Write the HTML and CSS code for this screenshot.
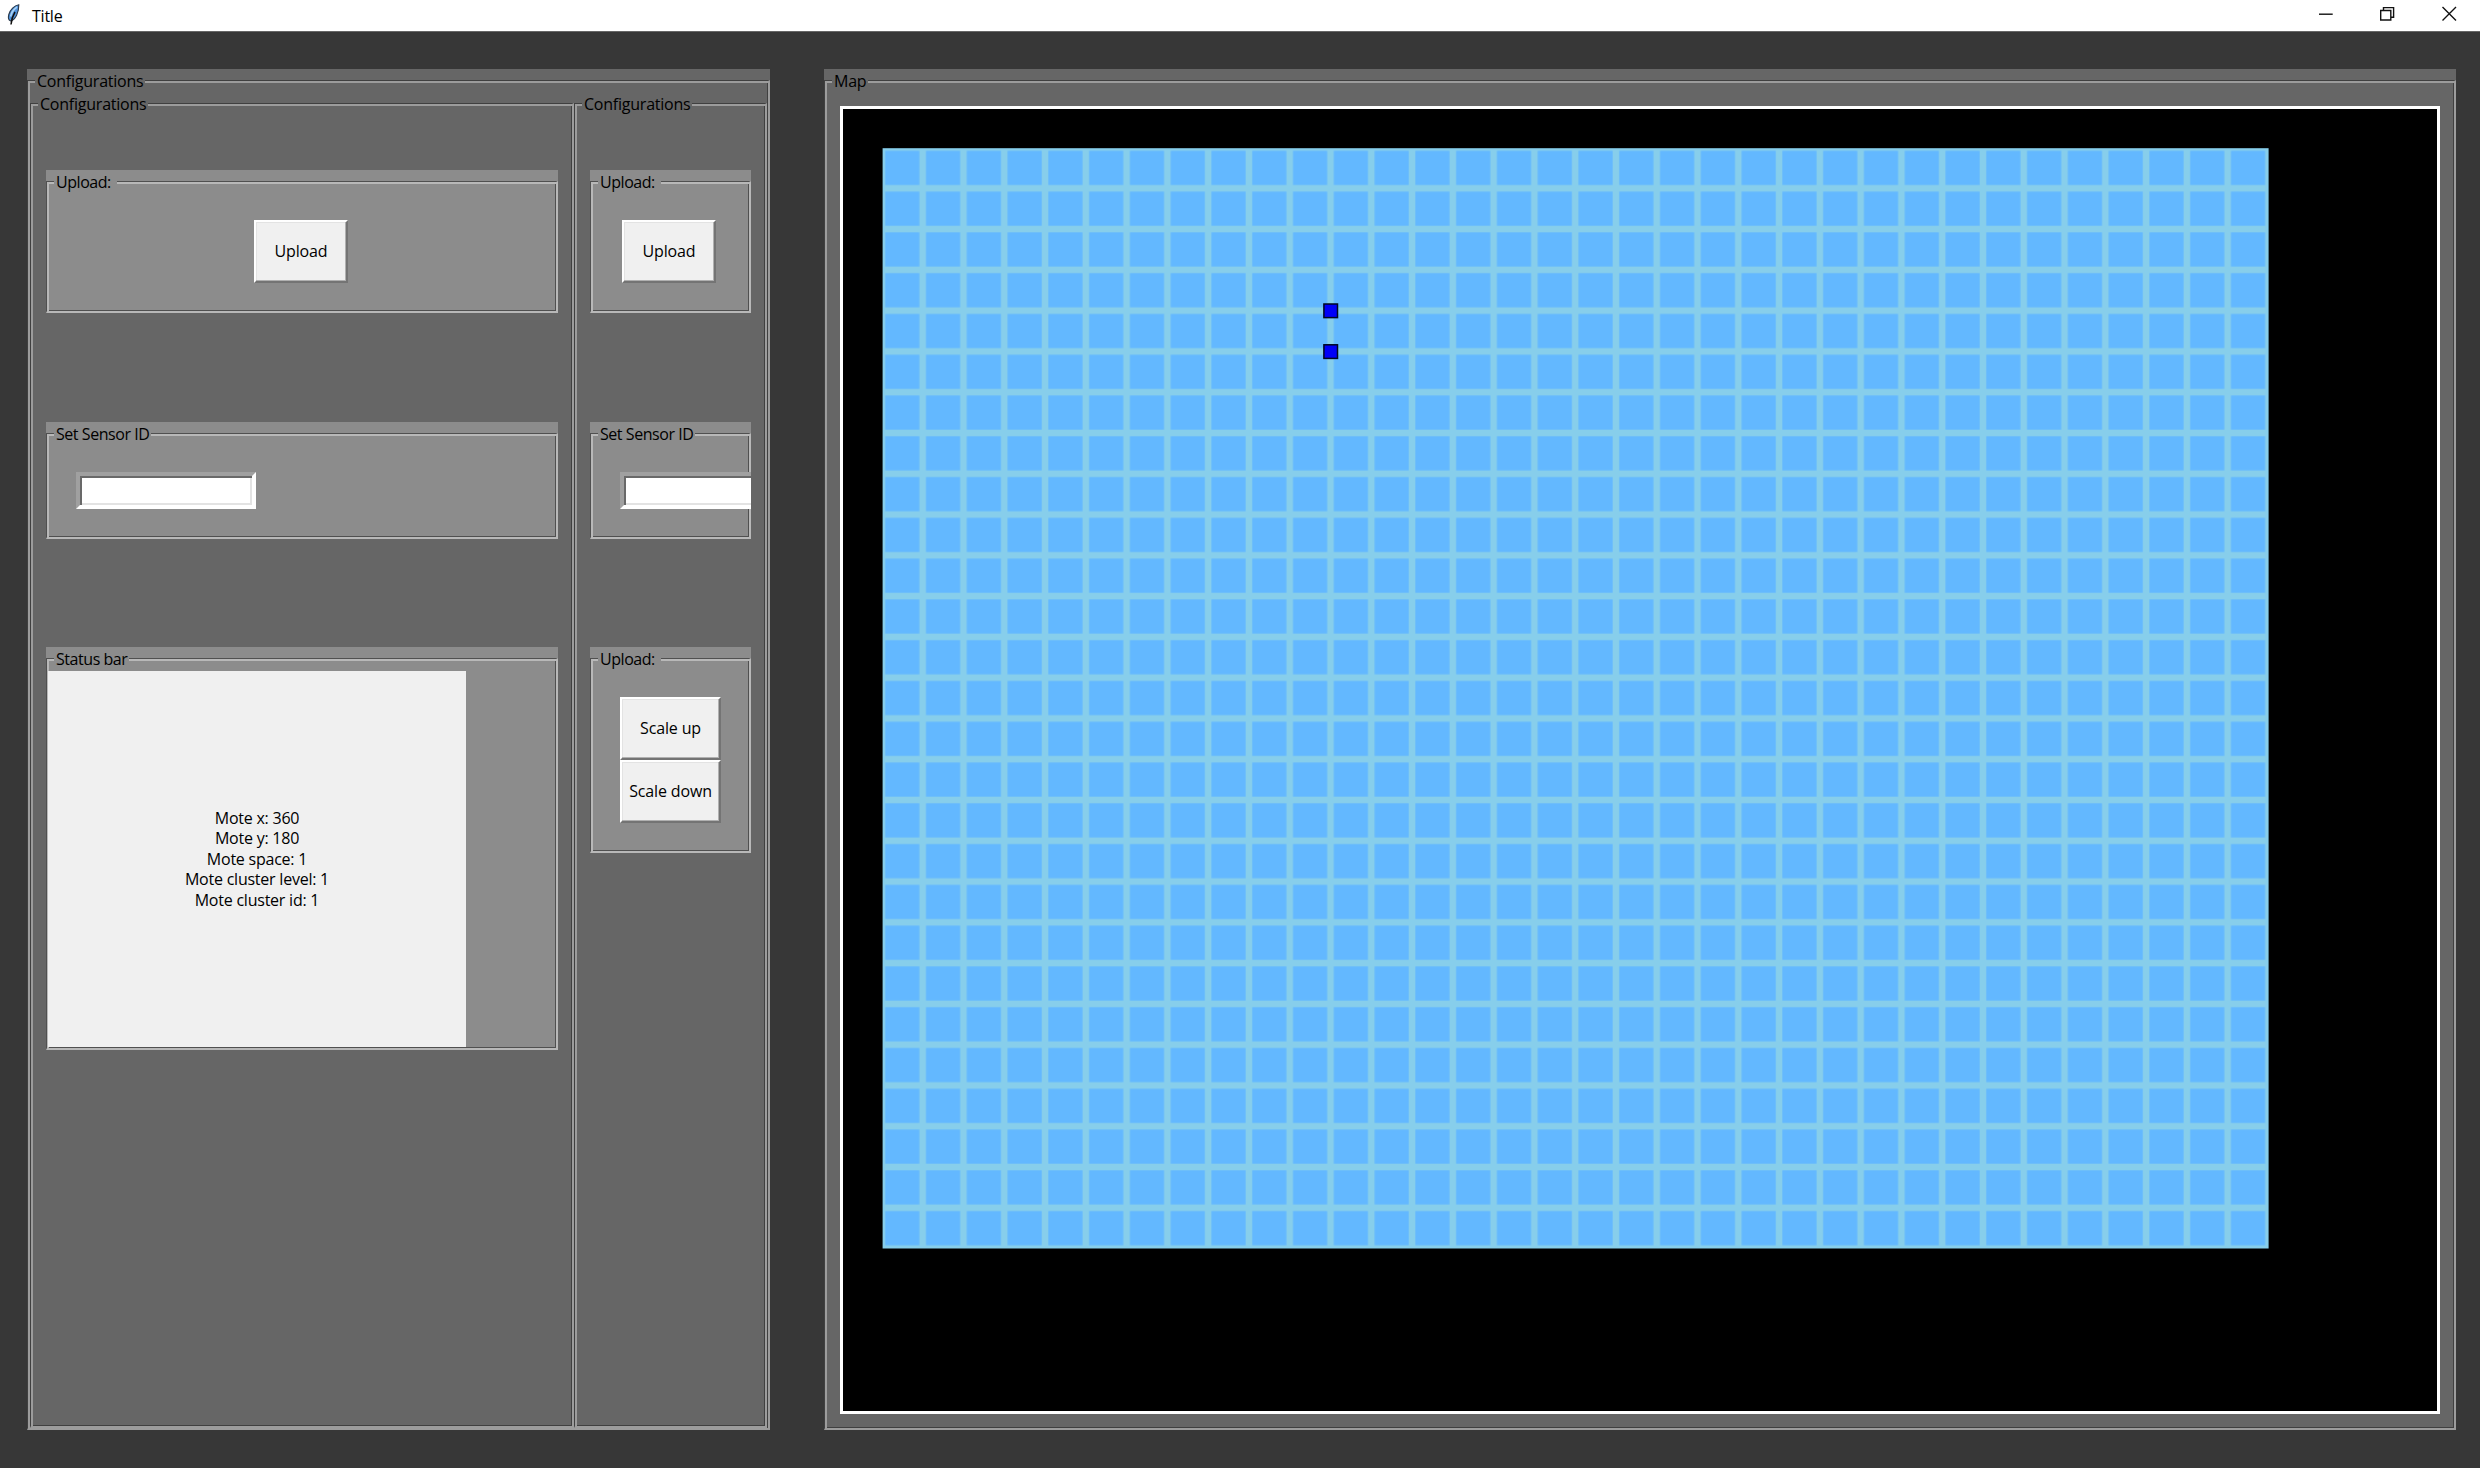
FILE: index.html
```html
<!DOCTYPE html>
<html lang="en">
<head>
<meta charset="utf-8">
<title>Title</title>
<link rel="stylesheet" href="styles.css">
</head>
<body>
<header class="titlebar">
  <svg class="feather" width="14" height="22" viewBox="0 0 14 22">
    <path d="M11.800.8C7.500 1.500 3 5.500 1.800 10.500c-.6 2.500-.5 4.500.4 5.500l1.500 1C8.500 15.500 12 8.500 11.800.8z" fill="#4f92dc" stroke="#2b3a4c" stroke-width="1.100"/>
    <path d="M10 3C7 5 4.500 8.500 3.600 12.500" fill="none" stroke="#a9d3f7" stroke-width="1.600"/>
    <path d="M8 8C6.200 11 4.400 15 4 20.500" fill="none" stroke="#111" stroke-width="1.500"/>
  </svg>
  <span class="title">Title</span>
  <svg class="controls" width="140" height="31" viewBox="0 0 140 31" fill="none" stroke="#111" stroke-width="1.400">
    <path d="M2 14.200H15.700"/>
    <path d="M63.700 10.500H73.800V20H63.700zM66.500 10.500V7.600H76.600V17.300H73.800"/>
    <path d="M125.500 7 139 20.500M139 7 125.500 20.500"/>
  </svg>
</header>
<main class="desktop">
  <section class="frame config">
    <div class="groove">
      <span class="legend">Configurations</span>
      <div class="columns">
        <section class="frame column">
          <div class="groove">
            <span class="legend">Configurations</span>
            <section class="frame group upload">
              <div class="groove"><span class="legend short">Upload:</span><button class="button">Upload</button></div>
            </section>
            <section class="frame group sensor">
              <div class="groove"><span class="legend snug">Set Sensor ID</span><input class="entry" type="text"></div>
            </section>
            <section class="frame group status">
              <div class="groove"><span class="legend snug">Status bar</span>
                <div class="readout">
                  <p>Mote x: 360</p>
                  <p>Mote y: 180</p>
                  <p>Mote space: 1</p>
                  <p>Mote cluster level: 1</p>
                  <p>Mote cluster id: 1</p>
                </div>
              </div>
            </section>
          </div>
        </section>
        <section class="frame column">
          <div class="groove">
            <span class="legend">Configurations</span>
            <section class="frame group upload">
              <div class="groove"><span class="legend short">Upload:</span><button class="button">Upload</button></div>
            </section>
            <section class="frame group sensor">
              <div class="groove"><span class="legend snug">Set Sensor ID</span><input class="entry" type="text"></div>
            </section>
            <section class="frame group scale">
              <div class="groove"><span class="legend short">Upload:</span>
                <button class="button wide">Scale up</button>
                <button class="button wide">Scale down</button>
              </div>
            </section>
          </div>
        </section>
      </div>
    </div>
  </section>
  <section class="frame map">
    <div class="groove">
      <span class="legend">Map</span>
      <svg class="canvas" viewBox="843 109 1594 1302">
        <defs>
          <pattern id="cell" x="881.900" y="147.500" width="40.780" height="40.780" patternUnits="userSpaceOnUse">
            <rect x="3.300" y="3.300" width="34.200" height="34.200" fill="#63b8ff"/>
          </pattern>
        </defs>
        <rect x="882.600" y="148.200" width="1386" height="1100.300" fill="#87ceeb"/>
        <rect x="882.600" y="148.200" width="1385" height="1099.500" fill="url(#cell)"/>
        <g fill="#0000f8" stroke="#000820" stroke-width="1.500">
          <rect x="1323.900" y="304" width="13.600" height="13.600"/>
          <rect x="1323.900" y="344.800" width="13.600" height="13.600"/>
        </g>
      </svg>
    </div>
  </section>
</main>
</body>
</html>
```
FILE: styles.css
```css
* { box-sizing: border-box; }

body {
  margin: 0;
  height: 1468px;
  display: flex;
  flex-direction: column;
  background: #373737;
  color: #000;
  font: 16px/20.4px "Open Sans", "Noto Sans", sans-serif;
  letter-spacing: -0.23px;
  overflow: hidden;
}

.titlebar {
  height: 32px;
  display: flex;
  background: #fff;
  border-bottom: 1px solid #666;
}
.feather { margin: 4px 0 0 7px; }
.title { margin: 6px auto 0 11px; }
.controls { margin-right: 23px; }

.desktop {
  flex: 1;
  display: flex;
  gap: 54px;
  padding: 37px 24px 38px 27px;
}

/* Label frames: a strip above a grooved border, the caption set into its top edge */
.frame {
  display: flex;
  padding-top: 11px;
  background: #666;
}
.groove {
  position: relative;
  flex: 1;
  min-width: 0;
  border: solid;
  border-width: 1px 2px 2px 1px;
  border-color: #404040 #9c9c9c #9c9c9c #404040;
  box-shadow: inset 2px 2px 0 #9c9c9c, inset -1px -1px 0 #404040;
}
.legend {
  position: absolute;
  top: -10px;
  left: 7px;
  padding: 0 2px;
  background: #666;
  white-space: nowrap;
}
.short { padding-right: 6px; letter-spacing: -0.45px; }
.snug { letter-spacing: -0.45px; }

.config { width: 743px; }
.config > .groove { padding: 11px 0 0 2px; }
.columns {
  height: 100%;
  display: grid;
  grid-template-columns: 544px 193px;
}
.column > .groove { padding: 66px 14px 0 15px; }

.group { background: #8c8c8c; }
.group > .groove {
  border-color: #505050 #b8b8b8 #b8b8b8 #505050;
  box-shadow: inset 2px 2px 0 #b8b8b8, inset -1px -1px 0 #505050;
}
.group .legend { background: #8c8c8c; }

.upload { height: 143px; margin-bottom: 109px; }
.upload > .groove { padding: 38px 0 0 31px; }
.column:first-child .upload > .groove { padding-left: 207px; }
.sensor { height: 117px; margin-bottom: 108px; overflow: hidden; }
.sensor > .groove { padding: 38px 0 0 29px; }
.status { height: 403px; }
.status > .groove { padding: 12px 0 0 1px; }
.scale { height: 206px; }
.scale > .groove { padding: 38px 0 0 29px; }

.button {
  display: block;
  width: 94px;
  height: 63px;
  padding: 0;
  border: solid;
  border-width: 2px;
  border-color: #fff #747474 #747474 #fff;
  box-shadow: inset -1px -1px 0 #b0b0b0, inset 1px 1px 0 #e3e3e3;
  background: #f0f0f0;
  color: #000;
  font: inherit;
  letter-spacing: -0.15px;
}
.wide { width: 101px; }

.entry {
  display: block;
  width: 180px;
  height: 37px;
  padding: 0;
  border: 4px solid;
  border-color: #a0a0a0 #fff #fff #a0a0a0;
  border-radius: 0;
  background: #fff;
  box-shadow: inset 2px 2px 0 #696969, inset -2px -2px 0 #e3e3e3;
}

.readout {
  width: 418px;
  height: 376px;
  display: flex;
  flex-direction: column;
  justify-content: center;
  background: #f0f0f0;
  text-align: center;
}
.readout p { margin: 0; }

.map { flex: 1; }
.map > .groove { padding: 25px 14px 14px 15px; }
.canvas {
  display: block;
  width: 1600px;
  height: 1308px;
  border: 3px solid #fff;
  background: #000;
}
```
